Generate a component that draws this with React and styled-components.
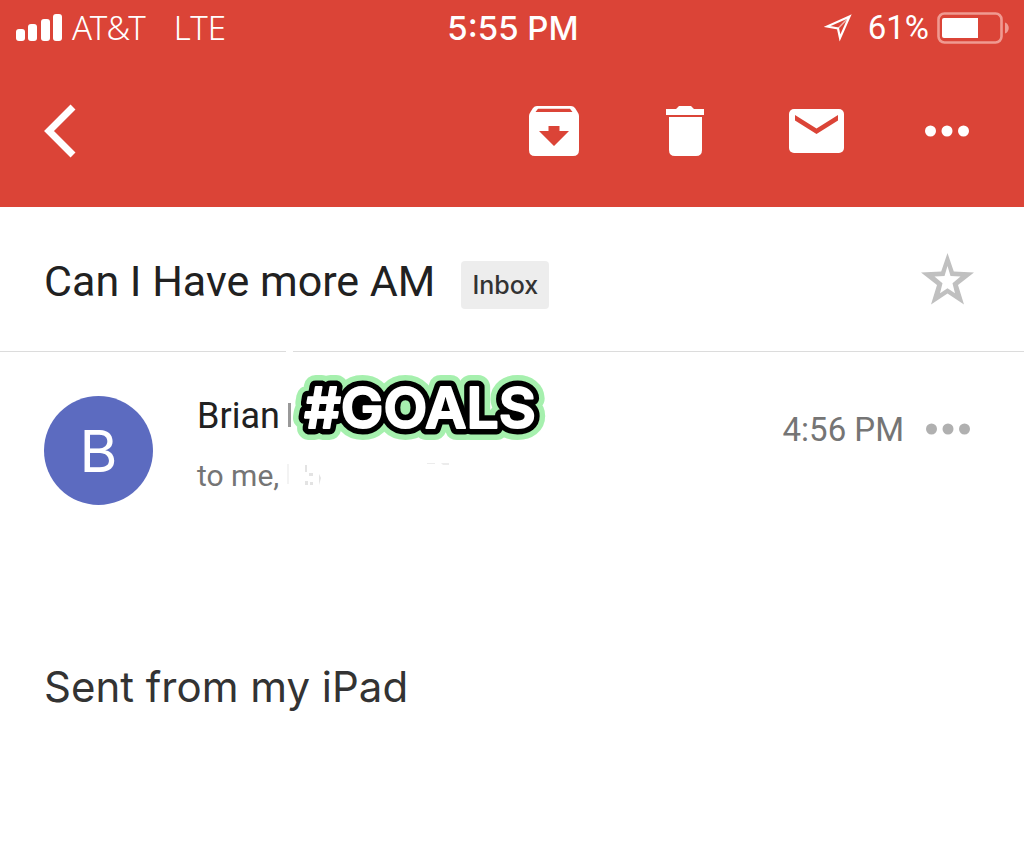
import React from 'react';
import styled, { createGlobalStyle } from 'styled-components';

const colors = {
  red: '#db4437',
  white: '#fff',
  indigo: '#5c6bc0',
  text: '#212121',
  body: '#333',
  muted: '#757575',
  dots: '#b0b0b0',
  star: '#c0c0c0',
  line: '#dcdcdc',
  chip: '#ededed',
  mint: '#a6f0ae',
};

const fonts = {
  inter: "Inter, 'Liberation Sans', sans-serif",
  roboto: "Roboto, 'Liberation Sans', sans-serif",
  noto: "'Noto Sans', sans-serif",
};

const GlobalStyle = createGlobalStyle`
  * {
    box-sizing: border-box;
  }
  body {
    margin: 0;
    background: ${colors.white};
    color: ${colors.text};
    font-family: ${fonts.inter};
  }
  h1, p {
    margin: 0;
    font-weight: 400;
  }
  svg {
    display: block;
    flex: none;
  }
`;

const Header = styled.header`
  background: ${colors.red};
  color: ${colors.white};
`;

const StatusBar = styled.div`
  display: grid;
  grid-template-columns: 1fr auto 1fr;
  align-items: center;
  height: 56px;
  padding: 0 14px 0 16px;
  font-size: 33px;
  line-height: 40px;
`;

const StatusGroup = styled.div`
  display: flex;
  align-items: center;
  justify-content: ${({ $end }) => ($end ? 'flex-end' : 'flex-start')};
  gap: 8px;
  font-family: ${({ $end }) => ($end ? fonts.roboto : fonts.noto)};
  font-weight: ${({ $end }) => ($end ? 400 : 300)};
`;

const Network = styled.span`
  margin-left: 20px;
`;

const Charge = styled.span`
  margin-left: 8px;
`;

const Clock = styled.time`
  font-weight: 500;
`;

const Toolbar = styled.nav`
  display: flex;
  align-items: center;
  justify-content: space-between;
  height: 151px;
  padding: 0 33px 2px 44px;
`;

const Actions = styled.div`
  display: flex;
  gap: 43px;
`;

const IconButton = styled.button`
  display: flex;
  align-items: center;
  justify-content: ${({ $start }) => ($start ? 'flex-start' : 'center')};
  width: 88px;
  height: 88px;
  padding: 0;
  border: 0;
  background: none;
  color: inherit;
`;

const SubjectRow = styled.section`
  display: flex;
  align-items: center;
  justify-content: space-between;
  min-height: 145px;
  padding: 0 33px 0 44px;
  border-bottom: 1px solid ${colors.line};
`;

const SubjectGroup = styled.div`
  display: flex;
  align-items: center;
  gap: 26px;
  padding-top: 4px;
`;

const Subject = styled.h1`
  font-family: ${fonts.roboto};
  font-size: 43px;
  line-height: 56px;
`;

const Label = styled.span`
  margin-top: 8px;
  padding: 8px 11px;
  border-radius: 4px;
  background: ${colors.chip};
  color: ${colors.body};
  font-size: 25px;
  font-weight: 500;
  line-height: 32px;
`;

const MessageRow = styled.section`
  position: relative;
  display: flex;
  align-items: flex-start;
  padding: 40px 32px 0 44px;
`;

const Avatar = styled.div`
  display: flex;
  align-items: center;
  justify-content: center;
  width: 109px;
  height: 109px;
  margin: 4px 44px 0 0;
  border-radius: 50%;
  background: ${colors.indigo};
  color: ${colors.white};
  font-size: 58px;
`;

const Details = styled.div`
  flex: 1;
  font-family: ${fonts.roboto};
`;

const Sender = styled.p`
  font-size: 36px;
  line-height: 48px;
`;

const StickerHolder = styled.strong`
  position: absolute;
  left: 284px;
  top: 18px;
`;

const StickerText = styled.text`
  fill: ${({ $color }) => $color};
  stroke: ${({ $color }) => $color};
  stroke-width: ${({ $outline }) => $outline}px;
  stroke-linejoin: round;
  stroke-linecap: round;
  text-anchor: middle;
  font-family: ${fonts.inter};
  font-size: 57px;
  font-weight: 600;
`;

const Recipients = styled.p`
  display: flex;
  align-items: center;
  gap: 8px;
  margin-top: 16px;
  color: ${colors.muted};
  font-size: 30px;
  line-height: 40px;
`;

const SentTime = styled.time`
  margin-top: 18px;
  color: ${colors.muted};
  font-family: ${fonts.roboto};
  font-size: 33px;
  line-height: 40px;
`;

const MoreButton = styled(IconButton)`
  height: 73px;
  color: ${colors.dots};
`;

const EraserMark = styled.span`
  position: absolute;
  left: 286px;
  top: -1px;
  width: 7px;
  height: 2px;
  background: ${colors.white};
`;

const Body = styled.p`
  padding: 154px 44px 0;
  color: ${colors.body};
  font-size: 42px;
  line-height: 56px;
`;

const SignalIcon = () => (
  <svg width="48" height="30" viewBox="0 0 48 30" fill="currentColor">
    <rect y="16" width="9" height="12" rx="3" />
    <rect x="12" y="11" width="9" height="17" rx="3" />
    <rect x="25" y="6" width="9" height="22" rx="3" />
    <rect x="37" y="1" width="9" height="27" rx="3" />
  </svg>
);

const LocationIcon = () => (
  <svg width="28" height="28" viewBox="0 0 28 28" fill="none" stroke="currentColor" strokeWidth="2.2">
    <path d="M25.500 2.500 3 12.500l11 2L16 24z" />
    <path d="M25.500 2.500 14 14.500" strokeWidth="1.500" opacity="0.6" />
  </svg>
);

const BatteryIcon = () => (
  <svg width="73" height="32" viewBox="0 0 73 32" fill="none">
    <rect x="1.500" y="1.500" width="63" height="29" rx="6" stroke="#f09a91" strokeWidth="2.600" />
    <path d="M68 10.500c5 1.500 5 9.500 0 11z" fill="#f09a91" />
    <path d="M7 6h34v20H7a2 2 0 0 1-2-2V8a2 2 0 0 1 2-2z" fill="#fff" />
  </svg>
);

const BackIcon = () => (
  <svg width="32" height="54" viewBox="0 0 32 54" fill="none" stroke="currentColor" strokeWidth="7">
    <path d="M29 3 5 27l24 24" />
  </svg>
);

const ArchiveIcon = () => (
  <svg width="50" height="50" viewBox="0 0 50 50" fill="currentColor" fillRule="evenodd">
    <path d="M8 0h34q2.500 0 4 2l2.500 4Q50 8 50 10v34q0 6-6 6H6q-6 0-6-6V10Q0 8 1.500 6L4 2q1.500-2 4-2zM9 2.800 6.500 6h37L41 2.800zM19.500 20v5H10l15 15 15-15h-9.500v-5z" />
  </svg>
);

const TrashIcon = () => (
  <svg width="38" height="50" viewBox="0 0 38 50" fill="currentColor">
    <path d="M0 3h10l3-3h12l3 3h10v6H0zM3 11h33V44q0 6-6 6H9q-6 0-6-6z" />
  </svg>
);

const MailIcon = () => (
  <svg width="55" height="44" viewBox="0 0 55 44" fill="none">
    <rect width="55" height="44" rx="5" fill="currentColor" />
    <path d="M6 6l21.500 13.500L49 6v5.500L27.500 25 6 11.500z" fill={colors.red} />
  </svg>
);

const DotsIcon = () => (
  <svg width="44" height="12" viewBox="0 0 44 12" fill="currentColor">
    <circle cx="5.500" cy="6" r="5.500" />
    <circle cx="22" cy="6" r="5.500" />
    <circle cx="38.500" cy="6" r="5.500" />
  </svg>
);

const StarIcon = () => (
  <svg width="53" height="52" viewBox="0 0 53 52" fill={colors.star} fillRule="evenodd">
    <path d="M26.500 0l6.300 18.500 20.200 1L37 32l6 19.500-16.500-11-16.500 11 6-19.500L0 19.500l20.200-1zM26.500 13l-3 10-10 .6 8 6.700-2.500 10 7.500-5 7.500 5-2.500-10 8-6.700-10-.6z" />
  </svg>
);

// leftovers of the addresses that were wiped out
const Smudges = () => (
  <svg width="200" height="30" viewBox="0 0 200 30" fill="#d8d8d8" opacity="0.7">
    <path d="M0 3h2v20H0z" opacity="0.4" />
    <path d="M18 4h2v7h-2zM22 12h4v3h-4zM18 20h3v4h-3zM23 21h3v3h-3zM32 13l2 4-2 7z" />
    <path d="M140 2h8v1h-8zM154 2h8v2h-6z" opacity="0.7" />
  </svg>
);

const outlines = [
  { color: colors.mint, outline: 24 },
  { color: '#000', outline: 13 },
  { color: colors.white, outline: 2 },
];

const Sticker = () => (
  <StickerHolder>
    <svg width="272" height="76" viewBox="0 0 272 76" role="img" aria-label="#GOALS">
      <rect x="4" y="33" width="3" height="24" fill="#999" />
      {outlines.map(({ color, outline }) => (
        <StickerText key={color} x="136" y="58" $color={color} $outline={outline}>
          #GOALS
        </StickerText>
      ))}
    </svg>
  </StickerHolder>
);

const actions = [
  { name: 'Archive', Icon: ArchiveIcon },
  { name: 'Delete', Icon: TrashIcon },
  { name: 'Mark as unread', Icon: MailIcon },
  { name: 'More', Icon: DotsIcon },
];

const App = () => (
  <>
    <GlobalStyle />
    <Header>
      <StatusBar>
        <StatusGroup>
          <SignalIcon />
          <span>AT&amp;T</span>
          <Network>LTE</Network>
        </StatusGroup>
        <Clock>5:55 PM</Clock>
        <StatusGroup $end>
          <LocationIcon />
          <Charge>61%</Charge>
          <BatteryIcon />
        </StatusGroup>
      </StatusBar>
      <Toolbar>
        <IconButton $start aria-label="Back">
          <BackIcon />
        </IconButton>
        <Actions>
          {actions.map(({ name, Icon }) => (
            <IconButton key={name} aria-label={name}>
              <Icon />
            </IconButton>
          ))}
        </Actions>
      </Toolbar>
    </Header>

    <main>
      <SubjectRow>
        <SubjectGroup>
          <Subject>Can I Have more AM</Subject>
          <Label>Inbox</Label>
        </SubjectGroup>
        <IconButton aria-label="Star">
          <StarIcon />
        </IconButton>
      </SubjectRow>

      <MessageRow>
        <EraserMark />
        <Avatar>B</Avatar>
        <Details>
          <Sender>Brian</Sender>
          <Recipients>
            to me,
            <Smudges />
          </Recipients>
        </Details>
        <Sticker />
        <SentTime>4:56 PM</SentTime>
        <MoreButton aria-label="More options">
          <DotsIcon />
        </MoreButton>
      </MessageRow>

      <Body>Sent from my iPad</Body>
    </main>
  </>
);

export default App;
